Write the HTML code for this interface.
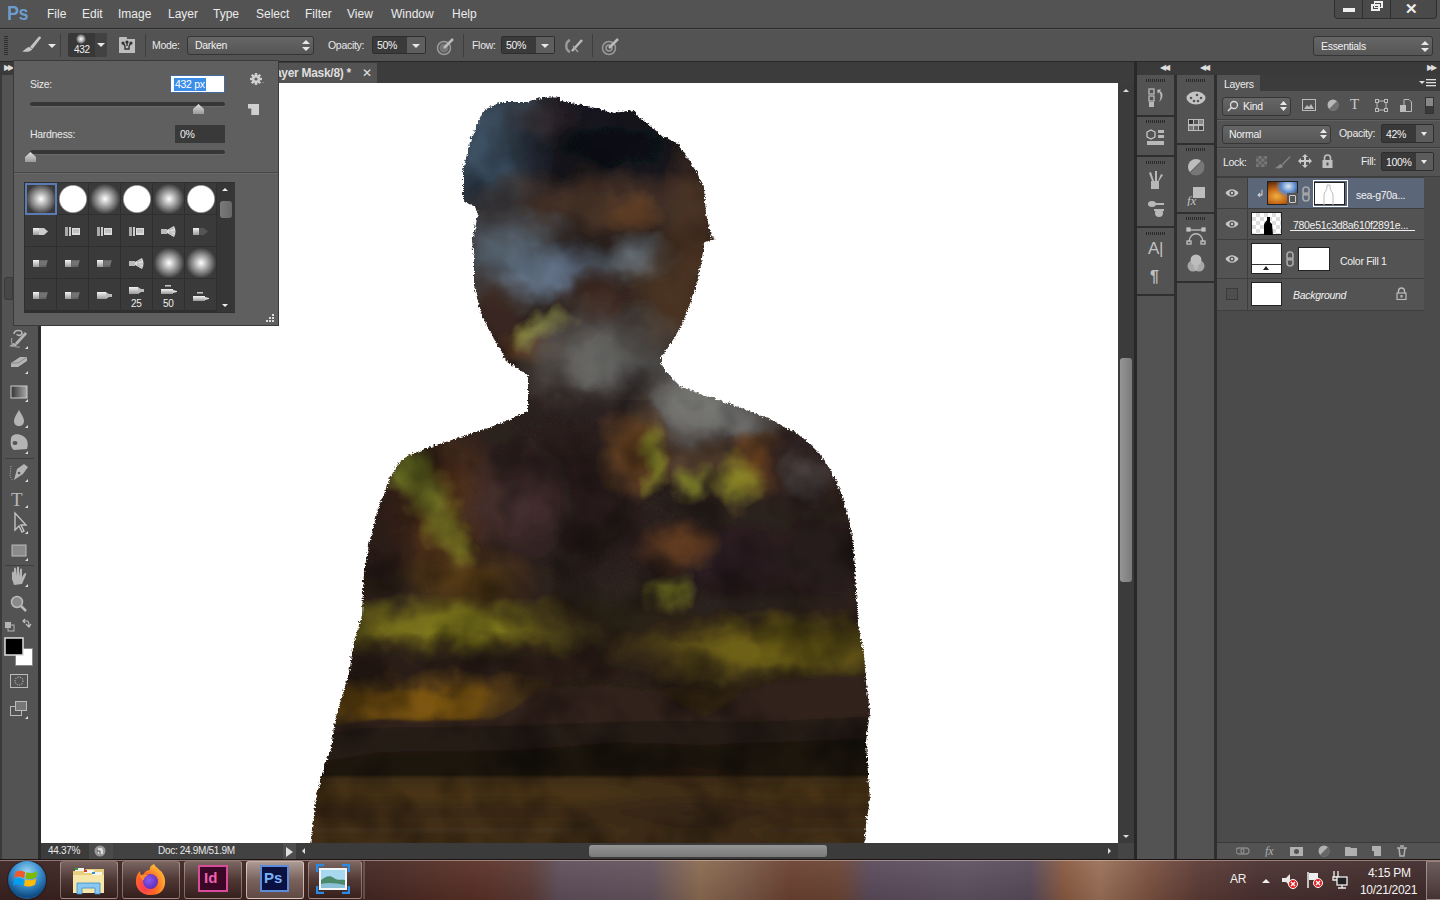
<!DOCTYPE html>
<html><head><meta charset="utf-8">
<style>
*{margin:0;padding:0;box-sizing:border-box}
html,body{width:1440px;height:900px;overflow:hidden;background:#535353;font-family:"Liberation Sans",sans-serif;color:#e6e6e6}
.a{position:absolute}
.t{position:absolute;white-space:nowrap;font-size:10.5px;line-height:12px;letter-spacing:-0.3px;color:#e8e8e8}
</style></head><body>
<!-- menu bar -->
<div class="a" style="left:0;top:0;width:1440px;height:28px;background:#535353"></div>
<div class="a" style="left:0;top:28px;width:1440px;height:1px;background:#2b2b2b"></div>
<div class="t" style="left:7px;top:2px;font-size:20px;line-height:22px;font-weight:bold;letter-spacing:-0.5px;color:#6d9dcf;transform:scaleX(0.9);transform-origin:0 0">Ps</div>
<div id="menu" class="t" style="top:7px;font-size:12px;line-height:14px;letter-spacing:0;color:#ececec">
<span class="a" style="left:47px">File</span><span class="a" style="left:82px">Edit</span><span class="a" style="left:118px">Image</span><span class="a" style="left:168px">Layer</span><span class="a" style="left:213px">Type</span><span class="a" style="left:256px">Select</span><span class="a" style="left:305px">Filter</span><span class="a" style="left:347px">View</span><span class="a" style="left:391px">Window</span><span class="a" style="left:452px">Help</span>
</div>
<!-- window controls -->
<div class="a" style="left:1334px;top:0;width:103px;height:19px;background:#4a4a4a;border:1px solid #2f2f2f;border-top:none;border-radius:0 0 4px 4px"></div>
<div class="a" style="left:1362px;top:0;width:1px;height:19px;background:#2f2f2f"></div>
<div class="a" style="left:1390px;top:0;width:1px;height:19px;background:#2f2f2f"></div>
<div class="a" style="left:1343px;top:8px;width:12px;height:4px;background:#eee"></div>
<div class="a" style="left:1371px;top:4px;width:9px;height:7px;border:2px solid #eee"></div>
<div class="a" style="left:1374px;top:1px;width:9px;height:7px;border:2px solid #eee;border-left-width:1px;border-bottom-width:1px"></div>
<div class="t" style="left:1405px;top:1px;font-size:15px;line-height:16px;font-weight:bold;color:#eee">✕</div>

<!-- options bar -->
<div class="a" style="left:0;top:29px;width:1440px;height:32px;background:#535353;border-top:1px solid #5e5e5e"></div>
<div class="a" style="left:0;top:61px;width:1440px;height:1px;background:#282828"></div>

<!-- options bar content -->
<div class="a" style="left:4px;top:36px;width:4px;height:20px;background:repeating-linear-gradient(#2e2e2e 0 1px,transparent 1px 2px)"></div>
<svg class="a" style="left:20px;top:34px" width="24" height="20" viewBox="0 0 24 20"><path d="M18.5,3 L10,13 L12.5,15 L20.5,4.5 Z" fill="#c4c4c4"/><circle cx="19.6" cy="3.8" r="1.3" fill="#c4c4c4"/><path d="M9.5,13 C6.5,13 5,16.5 2,17.3 C6,18.6 11,17.5 12.3,15.2 Z" fill="#c4c4c4"/></svg>
<div class="a" style="left:48px;top:44px;width:0;height:0;border-left:4px solid transparent;border-right:4px solid transparent;border-top:4px solid #e8e8e8"></div>
<div class="a" style="left:60px;top:34px;width:1px;height:23px;background:#3f3f3f"></div>
<div class="a" style="left:68px;top:33px;width:39px;height:24px;background:#383838;border-radius:2px"></div>
<div class="a" style="left:95px;top:33px;width:12px;height:24px;background:#424242;border-radius:0 2px 2px 0"></div>
<div class="a" style="left:76px;top:34px;width:10px;height:10px;border-radius:50%;background:radial-gradient(#fff 0,#aaa 40%,#383838 75%)"></div>
<div class="t" style="left:74px;top:44px;font-size:10px;line-height:11px;color:#f0f0f0">432</div>
<div class="a" style="left:97px;top:43px;width:0;height:0;border-left:4px solid transparent;border-right:4px solid transparent;border-top:4px solid #e8e8e8"></div>
<div class="a" style="left:119px;top:37px;width:8px;height:3px;background:#bdbdbd;border-radius:1px 1px 0 0"></div><div class="a" style="left:119px;top:39px;width:16px;height:14px;background:#bdbdbd"></div>
<svg class="a" style="left:119px;top:37px" width="16" height="16" viewBox="0 0 16 16"><circle cx="4" cy="6" r="1.6" fill="#333"/><circle cx="8" cy="5" r="1.6" fill="#333"/><circle cx="12" cy="6" r="1.6" fill="#333"/><path d="M4,6 L6,9 M12,6 L10,9 M8,5 L8,9 M6,9 L6,12 L10,12 L10,9" stroke="#333" stroke-width="1.4" fill="none"/></svg>
<div class="a" style="left:145px;top:34px;width:1px;height:23px;background:#3f3f3f"></div>
<div class="t" style="left:152px;top:39px;color:#e8e8e8">Mode:</div>
<div class="a" style="left:187px;top:36px;width:127px;height:19px;background:linear-gradient(#666,#555);border:1px solid #353535;border-radius:3px"></div>
<div class="t" style="left:195px;top:39px;color:#f0f0f0">Darken</div>
<svg class="a" style="left:302px;top:39px" width="8" height="13" viewBox="0 0 8 13"><path d="M0,5 L4,1 L8,5 Z M0,8 L4,12 L8,8 Z" fill="#e8e8e8"/></svg>
<div class="t" style="left:328px;top:39px">Opacity:</div>
<div class="a" style="left:372px;top:36px;width:54px;height:18px;background:#3a3a3a;border:1px solid #2e2e2e;border-radius:2px"></div>
<div class="a" style="left:407px;top:37px;width:18px;height:16px;background:#5e5e5e"></div>
<div class="t" style="left:377px;top:39px;color:#f4f4f4">50%</div>
<div class="a" style="left:412px;top:44px;width:0;height:0;border-left:4px solid transparent;border-right:4px solid transparent;border-top:4px solid #e8e8e8"></div>
<svg class="a" style="left:436px;top:36px" width="20" height="20" viewBox="0 0 20 20"><circle cx="8" cy="12" r="6.5" fill="none" stroke="#9a9a9a" stroke-width="1.5"/><circle cx="8" cy="12" r="4.5" fill="#777"/><path d="M8,12 L17,3" stroke="#bbb" stroke-width="2.5"/></svg>
<div class="a" style="left:463px;top:34px;width:1px;height:23px;background:#3f3f3f"></div>
<div class="t" style="left:472px;top:39px">Flow:</div>
<div class="a" style="left:501px;top:36px;width:54px;height:18px;background:#3a3a3a;border:1px solid #2e2e2e;border-radius:2px"></div>
<div class="a" style="left:536px;top:37px;width:18px;height:16px;background:#5e5e5e"></div>
<div class="t" style="left:506px;top:39px;color:#f4f4f4">50%</div>
<div class="a" style="left:541px;top:44px;width:0;height:0;border-left:4px solid transparent;border-right:4px solid transparent;border-top:4px solid #e8e8e8"></div>
<svg class="a" style="left:564px;top:36px" width="22" height="20" viewBox="0 0 22 20"><path d="M6,4 C1,6 1,14 6,16" stroke="#999" stroke-width="2.5" fill="none"/><path d="M8,15 L18,4" stroke="#bbb" stroke-width="2.5"/><path d="M9,10 L14,16" stroke="#aaa" stroke-width="1.2"/></svg>
<div class="a" style="left:592px;top:34px;width:1px;height:23px;background:#3f3f3f"></div>
<svg class="a" style="left:601px;top:36px" width="20" height="20" viewBox="0 0 20 20"><circle cx="8" cy="12" r="6.5" fill="none" stroke="#9a9a9a" stroke-width="1.5"/><circle cx="8" cy="12" r="3" fill="none" stroke="#9a9a9a" stroke-width="1.5"/><path d="M8,12 L17,3" stroke="#bbb" stroke-width="2.5"/></svg>
<!-- essentials -->
<div class="a" style="left:1313px;top:36px;width:120px;height:20px;background:linear-gradient(#666,#565656);border:1px solid #353535;border-radius:3px"></div>
<div class="t" style="left:1321px;top:40px;color:#f0f0f0">Essentials</div>
<svg class="a" style="left:1421px;top:40px" width="8" height="13" viewBox="0 0 8 13"><path d="M0,5 L4,1 L8,5 Z M0,8 L4,12 L8,8 Z" fill="#e8e8e8"/></svg>

<!-- tab bar -->
<div class="a" style="left:0;top:62px;width:1134px;height:21px;background:#3c3c3c"></div>
<div class="a" style="left:0;top:63px;width:377px;height:20px;background:#535353"></div>
<div class="t" style="left:275px;top:66px;font-size:12px;line-height:14px;font-weight:bold;color:#dedede">ayer Mask/8) *</div>
<div class="t" style="left:362px;top:66px;font-size:12px;line-height:14px;color:#e0e0e0">✕</div>

<!-- left toolbar -->
<div class="a" style="left:0;top:62px;width:38px;height:797px;background:#535353;border-left:2px solid #3a3a3a"></div>
<div class="a" style="left:38px;top:62px;width:3px;height:797px;background:#2b2b2b"></div>

<!-- canvas -->
<div class="a" style="left:41px;top:83px;width:1077px;height:760px;background:#fff;overflow:hidden" id="canvas"><svg class="a" style="left:0;top:0" width="1077" height="760" viewBox="41 83 1077 760">
<defs>
<filter id="rough" x="250" y="40" width="680" height="860" filterUnits="userSpaceOnUse"><feTurbulence type="turbulence" baseFrequency="0.25" numOctaves="2" seed="3" result="n"/><feDisplacementMap in="SourceGraphic" in2="n" scale="4" xChannelSelector="R" yChannelSelector="G"/></filter><mask id="sil" maskUnits="userSpaceOnUse" x="0" y="0" width="1440" height="900"><path d="M462,199 L462,169 L470,137 L483,109 L500,101 L526,101 L536,98 L549,95.5 L557,95.5 L560,100 L586,105 L614,112 L633,109 L635,114 L644,120 L661,135 L676,142 L695,169 L703,188 L705,212 L710,236 L714,237 L703,242 L700,265 L693,292 L683,318 L673,338 L660,355 L660,362 L665,371 L679,385 L702,394 L738,406 L773,420 L800,435 L818,452 L829,468 L838,486 L846,511 L851,535 L854,565 L855,590 L857,623 L863,653 L865,682 L869,711 L865,740 L867,773 L869,798 L865,823 L863,845 L309,845 L311,828 L315,798 L321,773 L330,748 L334,719 L340,698 L348,673 L353,640 L361,615 L362,590 L363,572 L368,543 L378,505 L389,477 L396,464 L406,455 L429,446 L460,436 L498,423 L527,410 L527,374 L507,362 L493,338 L480,312 L473,285 L473,258 L471,240 L475,223 L477,212 L474,206 Z" fill="#fff" filter="url(#rough)"/></mask>
<radialGradient id="g0"><stop offset="0" stop-color="#40566a" stop-opacity="1"/><stop offset="0.3" stop-color="#40566a" stop-opacity="0.90"/><stop offset="0.7" stop-color="#40566a" stop-opacity="0.40"/><stop offset="1" stop-color="#40566a" stop-opacity="0"/></radialGradient><radialGradient id="g1"><stop offset="0" stop-color="#3e4e5c" stop-opacity="0.85"/><stop offset="0.3" stop-color="#3e4e5c" stop-opacity="0.77"/><stop offset="0.7" stop-color="#3e4e5c" stop-opacity="0.34"/><stop offset="1" stop-color="#3e4e5c" stop-opacity="0"/></radialGradient><radialGradient id="g2"><stop offset="0" stop-color="#1a2430" stop-opacity="0.6"/><stop offset="0.3" stop-color="#1a2430" stop-opacity="0.54"/><stop offset="0.7" stop-color="#1a2430" stop-opacity="0.24"/><stop offset="1" stop-color="#1a2430" stop-opacity="0"/></radialGradient><radialGradient id="g3"><stop offset="0" stop-color="#0e1018" stop-opacity="1"/><stop offset="0.3" stop-color="#0e1018" stop-opacity="0.90"/><stop offset="0.7" stop-color="#0e1018" stop-opacity="0.40"/><stop offset="1" stop-color="#0e1018" stop-opacity="0"/></radialGradient><radialGradient id="g4"><stop offset="0" stop-color="#3a2c2e" stop-opacity="0.6"/><stop offset="0.3" stop-color="#3a2c2e" stop-opacity="0.54"/><stop offset="0.7" stop-color="#3a2c2e" stop-opacity="0.24"/><stop offset="1" stop-color="#3a2c2e" stop-opacity="0"/></radialGradient><radialGradient id="g5"><stop offset="0" stop-color="#4a3224" stop-opacity="1"/><stop offset="0.3" stop-color="#4a3224" stop-opacity="0.90"/><stop offset="0.7" stop-color="#4a3224" stop-opacity="0.40"/><stop offset="1" stop-color="#4a3224" stop-opacity="0"/></radialGradient><radialGradient id="g6"><stop offset="0" stop-color="#4a3428" stop-opacity="0.9"/><stop offset="0.3" stop-color="#4a3428" stop-opacity="0.81"/><stop offset="0.7" stop-color="#4a3428" stop-opacity="0.36"/><stop offset="1" stop-color="#4a3428" stop-opacity="0"/></radialGradient><radialGradient id="g7"><stop offset="0" stop-color="#6a4426" stop-opacity="0.8"/><stop offset="0.3" stop-color="#6a4426" stop-opacity="0.72"/><stop offset="0.7" stop-color="#6a4426" stop-opacity="0.32"/><stop offset="1" stop-color="#6a4426" stop-opacity="0"/></radialGradient><radialGradient id="g8"><stop offset="0" stop-color="#5e6e7c" stop-opacity="1"/><stop offset="0.3" stop-color="#5e6e7c" stop-opacity="0.90"/><stop offset="0.7" stop-color="#5e6e7c" stop-opacity="0.40"/><stop offset="1" stop-color="#5e6e7c" stop-opacity="0"/></radialGradient><radialGradient id="g9"><stop offset="0" stop-color="#64748a" stop-opacity="1"/><stop offset="0.3" stop-color="#64748a" stop-opacity="0.90"/><stop offset="0.7" stop-color="#64748a" stop-opacity="0.40"/><stop offset="1" stop-color="#64748a" stop-opacity="0"/></radialGradient><radialGradient id="g10"><stop offset="0" stop-color="#74808a" stop-opacity="0.9"/><stop offset="0.3" stop-color="#74808a" stop-opacity="0.81"/><stop offset="0.7" stop-color="#74808a" stop-opacity="0.36"/><stop offset="1" stop-color="#74808a" stop-opacity="0"/></radialGradient><radialGradient id="g11"><stop offset="0" stop-color="#3e2a22" stop-opacity="1"/><stop offset="0.3" stop-color="#3e2a22" stop-opacity="0.90"/><stop offset="0.7" stop-color="#3e2a22" stop-opacity="0.40"/><stop offset="1" stop-color="#3e2a22" stop-opacity="0"/></radialGradient><radialGradient id="g12"><stop offset="0" stop-color="#4a3422" stop-opacity="1"/><stop offset="0.3" stop-color="#4a3422" stop-opacity="0.90"/><stop offset="0.7" stop-color="#4a3422" stop-opacity="0.40"/><stop offset="1" stop-color="#4a3422" stop-opacity="0"/></radialGradient><radialGradient id="g13"><stop offset="0" stop-color="#3a2820" stop-opacity="1"/><stop offset="0.3" stop-color="#3a2820" stop-opacity="0.90"/><stop offset="0.7" stop-color="#3a2820" stop-opacity="0.40"/><stop offset="1" stop-color="#3a2820" stop-opacity="0"/></radialGradient><radialGradient id="g14"><stop offset="0" stop-color="#6a4020" stop-opacity="0.8"/><stop offset="0.3" stop-color="#6a4020" stop-opacity="0.72"/><stop offset="0.7" stop-color="#6a4020" stop-opacity="0.32"/><stop offset="1" stop-color="#6a4020" stop-opacity="0"/></radialGradient><radialGradient id="g15"><stop offset="0" stop-color="#8a8a40" stop-opacity="0.85"/><stop offset="0.3" stop-color="#8a8a40" stop-opacity="0.77"/><stop offset="0.7" stop-color="#8a8a40" stop-opacity="0.34"/><stop offset="1" stop-color="#8a8a40" stop-opacity="0"/></radialGradient><radialGradient id="g16"><stop offset="0" stop-color="#9a9a48" stop-opacity="0.85"/><stop offset="0.3" stop-color="#9a9a48" stop-opacity="0.77"/><stop offset="0.7" stop-color="#9a9a48" stop-opacity="0.34"/><stop offset="1" stop-color="#9a9a48" stop-opacity="0"/></radialGradient><radialGradient id="g17"><stop offset="0" stop-color="#8a8a40" stop-opacity="0.7"/><stop offset="0.3" stop-color="#8a8a40" stop-opacity="0.63"/><stop offset="0.7" stop-color="#8a8a40" stop-opacity="0.28"/><stop offset="1" stop-color="#8a8a40" stop-opacity="0"/></radialGradient><radialGradient id="g18"><stop offset="0" stop-color="#6a6a68" stop-opacity="1"/><stop offset="0.3" stop-color="#6a6a68" stop-opacity="0.90"/><stop offset="0.7" stop-color="#6a6a68" stop-opacity="0.40"/><stop offset="1" stop-color="#6a6a68" stop-opacity="0"/></radialGradient><radialGradient id="g19"><stop offset="0" stop-color="#626260" stop-opacity="0.8"/><stop offset="0.3" stop-color="#626260" stop-opacity="0.72"/><stop offset="0.7" stop-color="#626260" stop-opacity="0.32"/><stop offset="1" stop-color="#626260" stop-opacity="0"/></radialGradient><radialGradient id="g20"><stop offset="0" stop-color="#2a2020" stop-opacity="0.9"/><stop offset="0.3" stop-color="#2a2020" stop-opacity="0.81"/><stop offset="0.7" stop-color="#2a2020" stop-opacity="0.36"/><stop offset="1" stop-color="#2a2020" stop-opacity="0"/></radialGradient><radialGradient id="g21"><stop offset="0" stop-color="#2a1e1e" stop-opacity="1"/><stop offset="0.3" stop-color="#2a1e1e" stop-opacity="0.90"/><stop offset="0.7" stop-color="#2a1e1e" stop-opacity="0.40"/><stop offset="1" stop-color="#2a1e1e" stop-opacity="0"/></radialGradient><radialGradient id="g22"><stop offset="0" stop-color="#2a1e20" stop-opacity="1"/><stop offset="0.3" stop-color="#2a1e20" stop-opacity="0.90"/><stop offset="0.7" stop-color="#2a1e20" stop-opacity="0.40"/><stop offset="1" stop-color="#2a1e20" stop-opacity="0"/></radialGradient><radialGradient id="g23"><stop offset="0" stop-color="#2a2020" stop-opacity="0.9"/><stop offset="0.3" stop-color="#2a2020" stop-opacity="0.81"/><stop offset="0.7" stop-color="#2a2020" stop-opacity="0.36"/><stop offset="1" stop-color="#2a2020" stop-opacity="0"/></radialGradient><radialGradient id="g24"><stop offset="0" stop-color="#727270" stop-opacity="1"/><stop offset="0.3" stop-color="#727270" stop-opacity="0.90"/><stop offset="0.7" stop-color="#727270" stop-opacity="0.40"/><stop offset="1" stop-color="#727270" stop-opacity="0"/></radialGradient><radialGradient id="g25"><stop offset="0" stop-color="#787874" stop-opacity="0.9"/><stop offset="0.3" stop-color="#787874" stop-opacity="0.81"/><stop offset="0.7" stop-color="#787874" stop-opacity="0.36"/><stop offset="1" stop-color="#787874" stop-opacity="0"/></radialGradient><radialGradient id="g26"><stop offset="0" stop-color="#747472" stop-opacity="0.7"/><stop offset="0.3" stop-color="#747472" stop-opacity="0.63"/><stop offset="0.7" stop-color="#747472" stop-opacity="0.28"/><stop offset="1" stop-color="#747472" stop-opacity="0"/></radialGradient><radialGradient id="g27"><stop offset="0" stop-color="#5a4432" stop-opacity="0.9"/><stop offset="0.3" stop-color="#5a4432" stop-opacity="0.81"/><stop offset="0.7" stop-color="#5a4432" stop-opacity="0.36"/><stop offset="1" stop-color="#5a4432" stop-opacity="0"/></radialGradient><radialGradient id="g28"><stop offset="0" stop-color="#6a4422" stop-opacity="1"/><stop offset="0.3" stop-color="#6a4422" stop-opacity="0.90"/><stop offset="0.7" stop-color="#6a4422" stop-opacity="0.40"/><stop offset="1" stop-color="#6a4422" stop-opacity="0"/></radialGradient><radialGradient id="g29"><stop offset="0" stop-color="#9aa030" stop-opacity="0.8"/><stop offset="0.3" stop-color="#9aa030" stop-opacity="0.72"/><stop offset="0.7" stop-color="#9aa030" stop-opacity="0.32"/><stop offset="1" stop-color="#9aa030" stop-opacity="0"/></radialGradient><radialGradient id="g30"><stop offset="0" stop-color="#9aa030" stop-opacity="0.8"/><stop offset="0.3" stop-color="#9aa030" stop-opacity="0.72"/><stop offset="0.7" stop-color="#9aa030" stop-opacity="0.32"/><stop offset="1" stop-color="#9aa030" stop-opacity="0"/></radialGradient><radialGradient id="g31"><stop offset="0" stop-color="#7a4a20" stop-opacity="0.9"/><stop offset="0.3" stop-color="#7a4a20" stop-opacity="0.81"/><stop offset="0.7" stop-color="#7a4a20" stop-opacity="0.36"/><stop offset="1" stop-color="#7a4a20" stop-opacity="0"/></radialGradient><radialGradient id="g32"><stop offset="0" stop-color="#9a9a2a" stop-opacity="0.8"/><stop offset="0.3" stop-color="#9a9a2a" stop-opacity="0.72"/><stop offset="0.7" stop-color="#9a9a2a" stop-opacity="0.32"/><stop offset="1" stop-color="#9a9a2a" stop-opacity="0"/></radialGradient><radialGradient id="g33"><stop offset="0" stop-color="#2e2222" stop-opacity="0.9"/><stop offset="0.3" stop-color="#2e2222" stop-opacity="0.81"/><stop offset="0.7" stop-color="#2e2222" stop-opacity="0.36"/><stop offset="1" stop-color="#2e2222" stop-opacity="0"/></radialGradient><radialGradient id="g34"><stop offset="0" stop-color="#6a6060" stop-opacity="0.6"/><stop offset="0.3" stop-color="#6a6060" stop-opacity="0.54"/><stop offset="0.7" stop-color="#6a6060" stop-opacity="0.24"/><stop offset="1" stop-color="#6a6060" stop-opacity="0"/></radialGradient><radialGradient id="g35"><stop offset="0" stop-color="#6a4020" stop-opacity="0.9"/><stop offset="0.3" stop-color="#6a4020" stop-opacity="0.81"/><stop offset="0.7" stop-color="#6a4020" stop-opacity="0.36"/><stop offset="1" stop-color="#6a4020" stop-opacity="0"/></radialGradient><radialGradient id="g36"><stop offset="0" stop-color="#8a8a28" stop-opacity="0.9"/><stop offset="0.3" stop-color="#8a8a28" stop-opacity="0.81"/><stop offset="0.7" stop-color="#8a8a28" stop-opacity="0.36"/><stop offset="1" stop-color="#8a8a28" stop-opacity="0"/></radialGradient><radialGradient id="g37"><stop offset="0" stop-color="#241a1e" stop-opacity="0.9"/><stop offset="0.3" stop-color="#241a1e" stop-opacity="0.81"/><stop offset="0.7" stop-color="#241a1e" stop-opacity="0.36"/><stop offset="1" stop-color="#241a1e" stop-opacity="0"/></radialGradient><radialGradient id="g38"><stop offset="0" stop-color="#5a3418" stop-opacity="0.9"/><stop offset="0.3" stop-color="#5a3418" stop-opacity="0.81"/><stop offset="0.7" stop-color="#5a3418" stop-opacity="0.36"/><stop offset="1" stop-color="#5a3418" stop-opacity="0"/></radialGradient><radialGradient id="g39"><stop offset="0" stop-color="#2a1a18" stop-opacity="0.9"/><stop offset="0.3" stop-color="#2a1a18" stop-opacity="0.81"/><stop offset="0.7" stop-color="#2a1a18" stop-opacity="0.36"/><stop offset="1" stop-color="#2a1a18" stop-opacity="0"/></radialGradient><radialGradient id="g40"><stop offset="0" stop-color="#4a3232" stop-opacity="0.8"/><stop offset="0.3" stop-color="#4a3232" stop-opacity="0.72"/><stop offset="0.7" stop-color="#4a3232" stop-opacity="0.32"/><stop offset="1" stop-color="#4a3232" stop-opacity="0"/></radialGradient><radialGradient id="g41"><stop offset="0" stop-color="#7e8a2a" stop-opacity="0.9"/><stop offset="0.3" stop-color="#7e8a2a" stop-opacity="0.81"/><stop offset="0.7" stop-color="#7e8a2a" stop-opacity="0.36"/><stop offset="1" stop-color="#7e8a2a" stop-opacity="0"/></radialGradient><radialGradient id="g42"><stop offset="0" stop-color="#7a8228" stop-opacity="0.9"/><stop offset="0.3" stop-color="#7a8228" stop-opacity="0.81"/><stop offset="0.7" stop-color="#7a8228" stop-opacity="0.36"/><stop offset="1" stop-color="#7a8228" stop-opacity="0"/></radialGradient><radialGradient id="g43"><stop offset="0" stop-color="#7a7a24" stop-opacity="0.9"/><stop offset="0.3" stop-color="#7a7a24" stop-opacity="0.81"/><stop offset="0.7" stop-color="#7a7a24" stop-opacity="0.36"/><stop offset="1" stop-color="#7a7a24" stop-opacity="0"/></radialGradient><radialGradient id="g44"><stop offset="0" stop-color="#8a8a28" stop-opacity="0.9"/><stop offset="0.3" stop-color="#8a8a28" stop-opacity="0.81"/><stop offset="0.7" stop-color="#8a8a28" stop-opacity="0.36"/><stop offset="1" stop-color="#8a8a28" stop-opacity="0"/></radialGradient><radialGradient id="g45"><stop offset="0" stop-color="#5e4018" stop-opacity="0.8"/><stop offset="0.3" stop-color="#5e4018" stop-opacity="0.72"/><stop offset="0.7" stop-color="#5e4018" stop-opacity="0.32"/><stop offset="1" stop-color="#5e4018" stop-opacity="0"/></radialGradient><radialGradient id="g46"><stop offset="0" stop-color="#807a1a" stop-opacity="1"/><stop offset="0.3" stop-color="#807a1a" stop-opacity="0.90"/><stop offset="0.7" stop-color="#807a1a" stop-opacity="0.40"/><stop offset="1" stop-color="#807a1a" stop-opacity="0"/></radialGradient><radialGradient id="g47"><stop offset="0" stop-color="#726416" stop-opacity="1"/><stop offset="0.3" stop-color="#726416" stop-opacity="0.90"/><stop offset="0.7" stop-color="#726416" stop-opacity="0.40"/><stop offset="1" stop-color="#726416" stop-opacity="0"/></radialGradient><radialGradient id="g48"><stop offset="0" stop-color="#2a2016" stop-opacity="0.9"/><stop offset="0.3" stop-color="#2a2016" stop-opacity="0.81"/><stop offset="0.7" stop-color="#2a2016" stop-opacity="0.36"/><stop offset="1" stop-color="#2a2016" stop-opacity="0"/></radialGradient><radialGradient id="g49"><stop offset="0" stop-color="#2a1e16" stop-opacity="1"/><stop offset="0.3" stop-color="#2a1e16" stop-opacity="0.90"/><stop offset="0.7" stop-color="#2a1e16" stop-opacity="0.40"/><stop offset="1" stop-color="#2a1e16" stop-opacity="0"/></radialGradient><radialGradient id="g50"><stop offset="0" stop-color="#7a5410" stop-opacity="1"/><stop offset="0.3" stop-color="#7a5410" stop-opacity="0.90"/><stop offset="0.7" stop-color="#7a5410" stop-opacity="0.40"/><stop offset="1" stop-color="#7a5410" stop-opacity="0"/></radialGradient><radialGradient id="g51"><stop offset="0" stop-color="#7e5812" stop-opacity="0.8"/><stop offset="0.3" stop-color="#7e5812" stop-opacity="0.72"/><stop offset="0.7" stop-color="#7e5812" stop-opacity="0.32"/><stop offset="1" stop-color="#7e5812" stop-opacity="0"/></radialGradient><radialGradient id="g52"><stop offset="0" stop-color="#6a4c12" stop-opacity="0.9"/><stop offset="0.3" stop-color="#6a4c12" stop-opacity="0.81"/><stop offset="0.7" stop-color="#6a4c12" stop-opacity="0.36"/><stop offset="1" stop-color="#6a4c12" stop-opacity="0"/></radialGradient><radialGradient id="g53"><stop offset="0" stop-color="#2e2218" stop-opacity="0.9"/><stop offset="0.3" stop-color="#2e2218" stop-opacity="0.81"/><stop offset="0.7" stop-color="#2e2218" stop-opacity="0.36"/><stop offset="1" stop-color="#2e2218" stop-opacity="0"/></radialGradient><radialGradient id="g54"><stop offset="0" stop-color="#2a2018" stop-opacity="0.9"/><stop offset="0.3" stop-color="#2a2018" stop-opacity="0.81"/><stop offset="0.7" stop-color="#2a2018" stop-opacity="0.36"/><stop offset="1" stop-color="#2a2018" stop-opacity="0"/></radialGradient>
<filter id="tex" x="0" y="0" width="100%" height="100%" color-interpolation-filters="sRGB"><feTurbulence type="fractalNoise" baseFrequency="0.018" numOctaves="3" seed="23"/><feColorMatrix type="matrix" values="0 0 0 0 0  0 0 0 0 0  0 0 0 0 0  2.4 0 0 0 -1.0"/></filter>
<filter id="soft" x="-5%" y="-5%" width="110%" height="110%"><feGaussianBlur stdDeviation="1.5"/></filter><radialGradient id="wdark"><stop offset="0" stop-color="#2a1e14" stop-opacity="0.55"/><stop offset="1" stop-color="#2a1e14" stop-opacity="0"/></radialGradient><linearGradient id="water" x1="0" y1="0" x2="0" y2="1"><stop offset="0" stop-color="#3e2c16"/><stop offset="0.25" stop-color="#4a3418"/><stop offset="0.5" stop-color="#3c2a15"/><stop offset="0.75" stop-color="#44301a"/><stop offset="1" stop-color="#3e2c16"/></linearGradient>
<filter id="disp" x="300" y="90" width="580" height="760" filterUnits="userSpaceOnUse"><feTurbulence type="fractalNoise" baseFrequency="0.03" numOctaves="3" seed="5" result="n"/><feDisplacementMap in="SourceGraphic" in2="n" scale="28" xChannelSelector="R" yChannelSelector="G"/></filter>
<linearGradient id="base" x1="0" y1="83" x2="0" y2="843" gradientUnits="userSpaceOnUse">
<stop offset="0" stop-color="#1a1a24"/>
<stop offset="0.2" stop-color="#2e2420"/>
<stop offset="0.45" stop-color="#2e221e"/>
<stop offset="0.68" stop-color="#30241a"/>
<stop offset="0.82" stop-color="#241a14"/>
<stop offset="0.92" stop-color="#3a2814"/>
<stop offset="1" stop-color="#3a2a16"/>
</linearGradient>
</defs>
<g mask="url(#sil)">
<g filter="url(#disp)"><rect x="250" y="40" width="680" height="860" fill="url(#base)"/>
<ellipse cx="492" cy="150" rx="67" ry="91" fill="url(#g0)"/><ellipse cx="522" cy="125" rx="46" ry="38" fill="url(#g1)"/><ellipse cx="478" cy="192" rx="26" ry="29" fill="url(#g2)"/><ellipse cx="612" cy="148" rx="137" ry="57" fill="url(#g3)"/><ellipse cx="545" cy="118" rx="43" ry="24" fill="url(#g4)"/><ellipse cx="692" cy="228" rx="40" ry="99" fill="url(#g5)"/><ellipse cx="600" cy="205" rx="144" ry="40" fill="url(#g6)"/><ellipse cx="630" cy="212" rx="32" ry="24" fill="url(#g7)"/><ellipse cx="512" cy="262" rx="77" ry="57" fill="url(#g8)"/><ellipse cx="560" cy="272" rx="74" ry="35" fill="url(#g9)"/><ellipse cx="640" cy="258" rx="46" ry="29" fill="url(#g10)"/><ellipse cx="595" cy="294" rx="46" ry="29" fill="url(#g11)"/><ellipse cx="672" cy="298" rx="49" ry="71" fill="url(#g12)"/><ellipse cx="495" cy="318" rx="40" ry="60" fill="url(#g13)"/><ellipse cx="530" cy="345" rx="35" ry="24" fill="url(#g14)"/><ellipse cx="528" cy="335" rx="19" ry="17" fill="url(#g15)"/><ellipse cx="545" cy="327" rx="22" ry="17" fill="url(#g16)"/><ellipse cx="561" cy="318" rx="17" ry="14" fill="url(#g17)"/><ellipse cx="605" cy="362" rx="95" ry="67" fill="url(#g18)"/><ellipse cx="640" cy="387" rx="60" ry="38" fill="url(#g19)"/><ellipse cx="575" cy="418" rx="81" ry="32" fill="url(#g20)"/><ellipse cx="560" cy="500" rx="144" ry="130" fill="url(#g21)"/><ellipse cx="725" cy="560" rx="186" ry="88" fill="url(#g22)"/><ellipse cx="634" cy="405" rx="53" ry="43" fill="url(#g23)"/><ellipse cx="712" cy="410" rx="91" ry="49" fill="url(#g24)"/><ellipse cx="688" cy="396" rx="43" ry="35" fill="url(#g25)"/><ellipse cx="735" cy="420" rx="46" ry="24" fill="url(#g26)"/><ellipse cx="693" cy="466" rx="57" ry="29" fill="url(#g27)"/><ellipse cx="636" cy="452" rx="43" ry="53" fill="url(#g28)"/><ellipse cx="654" cy="460" rx="18" ry="39" fill="url(#g29)"/><ellipse cx="693" cy="484" rx="26" ry="21" fill="url(#g30)"/><ellipse cx="760" cy="462" rx="35" ry="40" fill="url(#g31)"/><ellipse cx="740" cy="482" rx="26" ry="32" fill="url(#g32)"/><ellipse cx="804" cy="468" rx="53" ry="53" fill="url(#g33)"/><ellipse cx="807" cy="478" rx="32" ry="26" fill="url(#g34)"/><ellipse cx="680" cy="547" rx="43" ry="32" fill="url(#g35)"/><ellipse cx="669" cy="593" rx="29" ry="24" fill="url(#g36)"/><ellipse cx="822" cy="555" rx="53" ry="49" fill="url(#g37)"/><ellipse cx="440" cy="510" rx="67" ry="91" fill="url(#g38)"/><ellipse cx="385" cy="540" rx="35" ry="67" fill="url(#g39)"/><ellipse cx="515" cy="500" rx="60" ry="60" fill="url(#g40)"/><ellipse cx="410" cy="470" rx="29" ry="26" fill="url(#g41)"/><ellipse cx="428" cy="495" rx="29" ry="32" fill="url(#g42)"/><ellipse cx="445" cy="525" rx="29" ry="32" fill="url(#g43)"/><ellipse cx="458" cy="553" rx="26" ry="24" fill="url(#g44)"/><ellipse cx="470" cy="580" rx="74" ry="38" fill="url(#g45)"/><ellipse cx="455" cy="628" rx="165" ry="35" fill="url(#g46)"/><ellipse cx="770" cy="650" rx="172" ry="40" fill="url(#g47)"/><ellipse cx="620" cy="618" rx="130" ry="29" fill="url(#g48)"/><ellipse cx="495" cy="668" rx="256" ry="38" fill="url(#g49)"/><ellipse cx="425" cy="704" rx="165" ry="35" fill="url(#g50)"/><ellipse cx="400" cy="706" rx="88" ry="24" fill="url(#g51)"/><ellipse cx="705" cy="704" rx="68" ry="24" fill="url(#g52)"/><ellipse cx="612" cy="708" rx="151" ry="40" fill="url(#g53)"/><ellipse cx="795" cy="708" rx="130" ry="43" fill="url(#g54)"/></g>
<g filter="url(#soft)">
<path d="M300,727 L336,725 L380,719 L421,721 L493,719 L513,709 L542,689 L602,685 L662,693 L703,717 L719,709 L743,693 L783,679 L880,676 L880,780 L300,780 Z" fill="#30241a"/>
<path d="M300,738 L360,728 L500,726 L640,721 L760,722 L880,716 L880,778 L300,778 Z" fill="#271c15"/><path d="M300,765 L380,752 L520,750 L620,742 L700,745 L880,738 L880,778 L300,778 Z" fill="#1f1610"/>
<rect x="300" y="777" width="580" height="70" fill="url(#water)"/><ellipse cx="690" cy="815" rx="110" ry="50" fill="url(#wdark)"/>
</g>

<rect x="300" y="90" width="580" height="310" filter="url(#tex)" opacity="0.22"/><rect x="300" y="400" width="580" height="450" filter="url(#tex)" opacity="0.4"/>
</g>
</svg>
</div>

<!-- vertical scrollbar -->
<div class="a" style="left:1118px;top:83px;width:16px;height:760px;background:#3b3b3b"></div>
<div class="a" style="left:1120px;top:358px;width:12px;height:224px;background:linear-gradient(90deg,#969696,#7a7a7a);border-radius:3px"></div>
<div class="a" style="left:1134px;top:62px;width:3px;height:797px;background:#282828"></div>

<!-- status bar -->
<div class="a" style="left:41px;top:843px;width:1093px;height:16px;background:#3b3b3b"></div>

<!-- left toolbar details -->
<div class="a" style="left:0;top:62px;width:38px;height:13px;background:#3a3a3a"></div>
<div class="t" style="left:4px;top:63px;font-size:8px;line-height:10px;color:#ddd;letter-spacing:-2px">▶▶</div>
<div class="a" style="left:4px;top:277px;width:9px;height:23px;background:#474747;border:1px solid #3a3a3a;border-radius:3px 0 0 3px"></div>
<svg class="a" style="left:0;top:326px" width="38" height="400" viewBox="0 0 38 400" fill="#b4b4b4">
<!-- history brush -->
<path d="M14,8 C14,4 22,3 22,7 C22,10 17,10 17,8" fill="none" stroke="#b4b4b4" stroke-width="1.6"/>
<path d="M25,6 L15,17 L17,19 L27,8Z"/><path d="M14,17 C12,17 11,20 9,20 C12,21 16,21 17,19Z"/>
<path d="M12,12 C10,18 14,22 20,21" fill="none" stroke="#999" stroke-width="1.2"/>
<path d="M28,20 L28,23 L25,23Z" fill="#ddd"/>
<!-- eraser -->
<path d="M11,37 L20,31 L27,31 L27,35 L18,41 L11,41Z"/><path d="M11,37 L18,37 L27,31" fill="none" stroke="#888" stroke-width="1"/>
<path d="M28,45 L28,48 L25,48Z" fill="#ddd"/>
<!-- gradient -->
<rect x="11" y="60" width="16" height="12" fill="url(#tg)" stroke="#ccc" stroke-width="1"/>
<path d="M28,73 L28,76 L25,76Z" fill="#ddd"/>
<!-- drop -->
<path d="M19,84 C16,89 14,92 14,95 C14,98 16,100 19,100 C22,100 24,98 24,95 C24,92 22,89 19,84Z"/>
<path d="M28,99 L28,102 L25,102Z" fill="#ddd"/>
<!-- dodge -->
<path d="M11,113 C11,108 18,107 23,110 C27,112 29,117 27,123 L14,124 C11,122 10,118 11,113Z"/><ellipse cx="15" cy="117" rx="2.5" ry="2" fill="#555"/>
<path d="M28,125 L28,128 L25,128Z" fill="#ddd"/>
<rect x="5" y="132" width="29" height="1" fill="#3e3e3e"/>
<!-- pen -->
<path d="M14,154 L17,143 L24,138 L28,141 L23,148Z"/><circle cx="19" cy="147" r="1.3" fill="#555"/>
<path d="M11,140 L10,150 L13,155" fill="none" stroke="#aaa" stroke-width="1" stroke-dasharray="1 1.3"/>
<path d="M28,153 L28,156 L25,156Z" fill="#ddd"/>
<!-- T -->
<text x="11" y="180" font-family="Liberation Serif" font-size="19" fill="#b8b8b8">T</text>
<path d="M28,179 L28,182 L25,182Z" fill="#ddd"/>
<!-- arrow -->
<path d="M15,187 L15,204 L19,200 L22,206 L24,205 L21,199 L26,199Z" fill="none" stroke="#c0c0c0" stroke-width="1.4"/>
<path d="M28,205 L28,208 L25,208Z" fill="#ddd"/>
<!-- rect -->
<rect x="12" y="219" width="14" height="11" fill="#8a8a8a" stroke="#bbb" stroke-width="1"/>
<path d="M28,232 L28,235 L25,235Z" fill="#ddd"/>
<rect x="5" y="239" width="29" height="1" fill="#3e3e3e"/>
<!-- hand -->
<path d="M12,253 L12,247 C12,245 14,245 14,247 L14,251 L14,243 C14,241 16,241 16,243 L16,250 L17,242 C17,240 19,240 19,242 L19,250 L20,244 C20,242 22,242 22,244 L22,251 L24,248 C25,246 27,247 26,249 L22,258 L14,259Z"/>
<path d="M28,258 L28,261 L25,261Z" fill="#ddd"/>
<!-- zoom -->
<circle cx="17" cy="276" r="5.5" fill="#8a8a8a" stroke="#bbb" stroke-width="1.5"/><path d="M21,280 L26,285" stroke="#bbb" stroke-width="2.5"/>
<!-- mini swatches -->
<rect x="5" y="296" width="6" height="6" fill="#b4b4b4"/><rect x="8" y="299" width="6" height="6" fill="none" stroke="#b4b4b4" stroke-width="1"/>
<path d="M23,295 L27,295 C29,295 29,297 29,300 M26,298 L29,301 L31,298 M25,293 L23,295 L25,297" fill="none" stroke="#c0c0c0" stroke-width="1.2"/>
<!-- colors -->
<rect x="15.5" y="322.5" width="17" height="17" fill="#fff" stroke="#888" stroke-width="1"/>
<rect x="5" y="312" width="18" height="17" fill="#000" stroke="#ddd" stroke-width="1.5"/>
<!-- quick mask -->
<rect x="10.5" y="348.5" width="17" height="13" fill="none" stroke="#bbb" stroke-width="1"/><circle cx="19" cy="355" r="4" fill="none" stroke="#ccc" stroke-dasharray="1.2 1.2"/>
<!-- screen mode -->
<rect x="10.5" y="380.5" width="11" height="9" fill="none" stroke="#bbb"/><rect x="15.5" y="375.5" width="11" height="9" fill="#777" stroke="#bbb"/>
<path d="M28,390 L28,393 L25,393Z" fill="#ddd"/>
<defs><linearGradient id="tg" x1="0" x2="1"><stop offset="0" stop-color="#333"/><stop offset="1" stop-color="#aaa"/></linearGradient></defs>
</svg>
<!-- status bar -->
<div class="a" style="left:41px;top:843px;width:48px;height:16px;background:#3c3c3c"></div>
<div class="t" style="left:48px;top:845px;font-size:10px;color:#e8e8e8">44.37%</div>
<div class="a" style="left:89px;top:843px;width:24px;height:16px;background:#4a4a4a"></div>
<svg class="a" style="left:94px;top:845px" width="12" height="12" viewBox="0 0 12 12"><circle cx="6" cy="6" r="5.5" fill="#999"/><path d="M4,3 L8,3 L9,5 L9,9 L4,9Z" fill="#ddd"/><path d="M3,6 L6,6 L6,9" fill="none" stroke="#555"/></svg>
<div class="a" style="left:113px;top:843px;width:170px;height:16px;background:#424242"></div>
<div class="t" style="left:158px;top:845px;font-size:10px;color:#e8e8e8">Doc: 24.9M/51.9M</div>
<div class="a" style="left:283px;top:843px;width:13px;height:16px;background:#4e4e4e"></div>
<div class="a" style="left:286px;top:847px;width:0;height:0;border-top:5px solid transparent;border-bottom:5px solid transparent;border-left:7px solid #e0e0e0"></div>
<div class="a" style="left:296px;top:843px;width:822px;height:16px;background:#3b3b3b"></div>
<div class="a" style="left:302px;top:848px;width:0;height:0;border-top:3px solid transparent;border-bottom:3px solid transparent;border-right:3px solid #ddd"></div>
<div class="a" style="left:1108px;top:848px;width:0;height:0;border-top:3px solid transparent;border-bottom:3px solid transparent;border-left:3px solid #ddd"></div>
<div class="a" style="left:589px;top:845px;width:238px;height:12px;background:linear-gradient(#949494,#7a7a7a);border-radius:3px"></div>
<div class="a" style="left:1118px;top:843px;width:16px;height:16px;background:#454545"></div>
<div class="a" style="left:1123px;top:89px;width:0;height:0;border-left:3px solid transparent;border-right:3px solid transparent;border-bottom:3px solid #ddd"></div>
<div class="a" style="left:1123px;top:835px;width:0;height:0;border-left:3px solid transparent;border-right:3px solid transparent;border-top:3px solid #ddd"></div>

<!-- panels -->
<div class="a" style="left:1137px;top:62px;width:303px;height:13px;background:#3a3a3a"></div>
<div class="a" style="left:1137px;top:75px;width:37px;height:784px;background:#535353"></div>
<div class="a" style="left:1174px;top:75px;width:3px;height:784px;background:#2f2f2f"></div>
<div class="a" style="left:1177px;top:75px;width:37px;height:784px;background:#535353"></div>
<div class="a" style="left:1214px;top:75px;width:3px;height:784px;background:#2f2f2f"></div>
<div class="a" style="left:1217px;top:75px;width:223px;height:784px;background:#535353"></div>

<!-- collapse arrows -->
<div class="t" style="left:1160px;top:63px;font-size:8px;line-height:10px;color:#ddd;letter-spacing:-2px">◀◀</div>
<div class="t" style="left:1200px;top:63px;font-size:8px;line-height:10px;color:#ddd;letter-spacing:-2px">◀◀</div>
<div class="t" style="left:1427px;top:63px;font-size:8px;line-height:10px;color:#ddd;letter-spacing:-2px">▶▶</div>
<!-- column 1 groups -->
<div class="a" style="left:1137px;top:115px;width:37px;height:2px;background:#2f2f2f"></div>
<div class="a" style="left:1137px;top:155px;width:37px;height:2px;background:#2f2f2f"></div>
<div class="a" style="left:1137px;top:226px;width:37px;height:2px;background:#2f2f2f"></div>
<div class="a" style="left:1137px;top:294px;width:37px;height:2px;background:#2f2f2f"></div>
<div class="a" style="left:1177px;top:143px;width:37px;height:2px;background:#2f2f2f"></div>
<div class="a" style="left:1177px;top:212px;width:37px;height:2px;background:#2f2f2f"></div>
<div class="a" style="left:1177px;top:281px;width:37px;height:2px;background:#2f2f2f"></div>
<div class="a" style="left:1146px;top:79px;width:19px;height:3px;background:repeating-linear-gradient(90deg,#2a2a2a 0 1px,transparent 1px 2px)"></div>
<div class="a" style="left:1146px;top:120px;width:19px;height:3px;background:repeating-linear-gradient(90deg,#2a2a2a 0 1px,transparent 1px 2px)"></div>
<div class="a" style="left:1146px;top:161px;width:19px;height:3px;background:repeating-linear-gradient(90deg,#2a2a2a 0 1px,transparent 1px 2px)"></div>
<div class="a" style="left:1146px;top:232px;width:19px;height:3px;background:repeating-linear-gradient(90deg,#2a2a2a 0 1px,transparent 1px 2px)"></div>
<div class="a" style="left:1186px;top:79px;width:19px;height:3px;background:repeating-linear-gradient(90deg,#2a2a2a 0 1px,transparent 1px 2px)"></div>
<div class="a" style="left:1186px;top:148px;width:19px;height:3px;background:repeating-linear-gradient(90deg,#2a2a2a 0 1px,transparent 1px 2px)"></div>
<div class="a" style="left:1186px;top:217px;width:19px;height:3px;background:repeating-linear-gradient(90deg,#2a2a2a 0 1px,transparent 1px 2px)"></div>
<!-- col1 icons -->
<svg class="a" style="left:1147px;top:88px" width="20" height="20" viewBox="0 0 20 20" fill="#b8b8b8"><rect x="2" y="1" width="5" height="5" fill="none" stroke="#b8b8b8" stroke-width="1.3"/><rect x="2" y="8" width="5" height="5" fill="none" stroke="#b8b8b8" stroke-width="1.3"/><rect x="2" y="14" width="5" height="5"/><path d="M10,2 L14,1 L13,3 C17,5 16,11 12,14 C14,10 14,6 12,4 L11,6Z"/></svg>
<svg class="a" style="left:1146px;top:128px" width="20" height="20" viewBox="0 0 20 20" fill="#b8b8b8"><path d="M5,2 L9,4 L9,9 L5,11 L1,9 L1,4Z" fill="none" stroke="#ccc" stroke-width="1.2"/><rect x="12" y="2" width="6" height="3"/><rect x="12" y="7" width="6" height="3"/><rect x="1" y="13" width="17" height="4"/></svg>
<svg class="a" style="left:1146px;top:170px" width="20" height="20" viewBox="0 0 20 20" fill="#b8b8b8"><rect x="5" y="11" width="8" height="8"/><path d="M6,11 L3,3 L5,2 L8,11 M9,11 L9,1 L11,1 L11,11 M12,11 L15,4 L17,5 L13,11"/></svg>
<svg class="a" style="left:1146px;top:199px" width="20" height="20" viewBox="0 0 20 20" fill="#b8b8b8"><rect x="2" y="4" width="16" height="2"/><rect x="8" y="10" width="10" height="2"/><ellipse cx="6" cy="5" rx="4" ry="3"/><ellipse cx="13" cy="14" rx="4" ry="4"/></svg>
<div class="t" style="left:1148px;top:240px;font-size:17px;line-height:18px;color:#c0c0c0">A|</div>
<div class="t" style="left:1150px;top:268px;font-size:16px;line-height:18px;font-weight:bold;color:#c0c0c0">¶</div>
<!-- col2 icons -->
<svg class="a" style="left:1186px;top:90px" width="20" height="16" viewBox="0 0 20 16"><ellipse cx="10" cy="8" rx="9.5" ry="6.5" fill="#c4c4c4"/><circle cx="5" cy="8" r="1.3" fill="#555"/><circle cx="8" cy="11" r="1.3" fill="#555"/><circle cx="12" cy="11" r="1.3" fill="#555"/><circle cx="15" cy="8" r="1.3" fill="#555"/><circle cx="11" cy="5" r="1.3" fill="#555"/></svg>
<svg class="a" style="left:1188px;top:119px" width="16" height="12" viewBox="0 0 16 12"><rect x="0" y="0" width="16" height="12" fill="#bbb"/><rect x="1" y="1" width="4" height="4" fill="#333"/><rect x="6" y="1" width="4" height="4" fill="#555"/><rect x="11" y="1" width="4" height="4" fill="#888"/><rect x="1" y="7" width="4" height="4" fill="#777"/><rect x="6" y="7" width="4" height="4" fill="#666"/><rect x="11" y="7" width="4" height="4" fill="#444"/></svg>
<svg class="a" style="left:1187px;top:158px" width="18" height="18" viewBox="0 0 18 18"><circle cx="9" cy="9" r="8" fill="#bdbdbd"/><path d="M3,15 L15,3" stroke="#555" stroke-width="1.5"/><path d="M15,3 A8,8 0 0,1 3,15Z" fill="#777"/></svg>
<svg class="a" style="left:1187px;top:186px" width="20" height="20" viewBox="0 0 20 20"><rect x="6" y="1" width="12" height="11" fill="#bdbdbd"/><text x="0" y="19" font-family="Liberation Serif" font-style="italic" font-size="13" fill="#c0c0c0">fx</text></svg>
<svg class="a" style="left:1186px;top:227px" width="20" height="18" viewBox="0 0 20 18" fill="none" stroke="#c0c0c0" stroke-width="1.3"><path d="M3,15 C4,4 16,4 17,15"/><rect x="1" y="14" width="4" height="3"/><rect x="15" y="14" width="4" height="3"/><path d="M2,3 L18,3"/><rect x="1" y="1" width="3" height="3" fill="#c0c0c0"/><rect x="16" y="1" width="3" height="3" fill="#c0c0c0"/></svg>
<svg class="a" style="left:1187px;top:254px" width="18" height="18" viewBox="0 0 18 18" fill="#bdbdbd"><circle cx="9" cy="6" r="5.5"/><circle cx="6" cy="12" r="5.5" opacity="0.8"/><circle cx="12" cy="12" r="5.5" opacity="0.8"/></svg>

<!-- layers panel -->
<div class="a" style="left:1260px;top:75px;width:180px;height:16px;background:#3c3c3c"></div>
<div class="t" style="left:1224px;top:78px;color:#ececec">Layers</div>
<svg class="a" style="left:1419px;top:78px" width="18" height="10" viewBox="0 0 18 10"><path d="M0,3 L6,3 L3,6Z" fill="#ddd"/><rect x="7" y="1" width="10" height="1.3" fill="#ddd"/><rect x="7" y="4" width="10" height="1.3" fill="#ddd"/><rect x="7" y="7" width="10" height="1.3" fill="#ddd"/></svg>
<div class="a" style="left:1217px;top:119px;width:223px;height:1px;background:#3e3e3e"></div>
<div class="a" style="left:1217px;top:120px;width:223px;height:1px;background:#606060"></div>
<div class="a" style="left:1217px;top:147px;width:223px;height:1px;background:#3e3e3e"></div>
<div class="a" style="left:1217px;top:148px;width:223px;height:1px;background:#606060"></div>
<div class="a" style="left:1222px;top:97px;width:69px;height:19px;background:linear-gradient(#666,#565656);border:1px solid #363636;border-radius:3px"></div>
<svg class="a" style="left:1227px;top:100px" width="12" height="12" viewBox="0 0 12 12"><circle cx="7" cy="5" r="3.5" fill="none" stroke="#ddd" stroke-width="1.3"/><path d="M5,7 L1,11" stroke="#ddd" stroke-width="1.6"/></svg>
<div class="t" style="left:1243px;top:100px;color:#f0f0f0">Kind</div>
<svg class="a" style="left:1280px;top:100px" width="7" height="12" viewBox="0 0 7 12"><path d="M0,5 L3.5,1 L7,5Z M0,7 L3.5,11 L7,7Z" fill="#e8e8e8"/></svg>
<svg class="a" style="left:1302px;top:99px" width="14" height="12" viewBox="0 0 14 12"><rect x="0.5" y="0.5" width="13" height="11" fill="none" stroke="#bbb"/><path d="M2,10 L5,6 L7,8 L9,5 L12,10Z" fill="#bbb"/></svg>
<svg class="a" style="left:1327px;top:99px" width="12" height="12" viewBox="0 0 12 12"><circle cx="6" cy="6" r="5.5" fill="#b8b8b8"/><path d="M10,2 A5.5,5.5 0 0,1 2,10Z" fill="#707070"/></svg>
<div class="t" style="left:1350px;top:96px;font-family:'Liberation Serif',serif;font-size:15px;line-height:16px;color:#c8c8c8">T</div>
<svg class="a" style="left:1375px;top:99px" width="13" height="13" viewBox="0 0 13 13" fill="none" stroke="#bbb"><rect x="2" y="2" width="9" height="9"/><rect x="0.5" y="0.5" width="3" height="3" fill="#535353"/><rect x="9.5" y="0.5" width="3" height="3" fill="#535353"/><rect x="0.5" y="9.5" width="3" height="3" fill="#535353"/><rect x="9.5" y="9.5" width="3" height="3" fill="#535353"/></svg>
<svg class="a" style="left:1400px;top:99px" width="12" height="13" viewBox="0 0 12 13"><path d="M4,0.5 L9,0.5 L11.5,3 L11.5,12.5 L4,12.5Z" fill="none" stroke="#bbb"/><rect x="0" y="6" width="6" height="7" fill="#bbb"/></svg>
<div class="a" style="left:1425px;top:97px;width:9px;height:17px;background:linear-gradient(#888 0,#888 50%,#3a3a3a 50%);border:1px solid #333"></div>
<!-- normal row -->
<div class="a" style="left:1222px;top:125px;width:109px;height:19px;background:linear-gradient(#666,#565656);border:1px solid #363636;border-radius:3px"></div>
<div class="t" style="left:1229px;top:128px;color:#f0f0f0">Normal</div>
<svg class="a" style="left:1320px;top:128px" width="7" height="12" viewBox="0 0 7 12"><path d="M0,5 L3.5,1 L7,5Z M0,7 L3.5,11 L7,7Z" fill="#e8e8e8"/></svg>
<div class="t" style="left:1339px;top:127px;color:#ececec">Opacity:</div>
<div class="a" style="left:1381px;top:124px;width:53px;height:19px;background:#393939;border:1px solid #2e2e2e;border-radius:2px"></div>
<div class="a" style="left:1416px;top:125px;width:17px;height:17px;background:#5c5c5c"></div>
<div class="t" style="left:1386px;top:128px;color:#f4f4f4">42%</div>
<div class="a" style="left:1421px;top:132px;width:0;height:0;border-left:3.5px solid transparent;border-right:3.5px solid transparent;border-top:4px solid #e8e8e8"></div>
<!-- lock row -->
<div class="t" style="left:1223px;top:156px;color:#ececec">Lock:</div>
<div class="a" style="left:1256px;top:156px;width:11px;height:11px;background:conic-gradient(#777 0 25%,#5e5e5e 0 50%,#777 0 75%,#5e5e5e 0) 0 0/5.5px 5.5px"></div>
<svg class="a" style="left:1275px;top:155px" width="16" height="14" viewBox="0 0 16 14"><path d="M15,1 L7,9 L8,10 L15.5,2Z" fill="#888"/><path d="M6,9 C4,9 3,12 0,13 C4,14 8,13 8,11Z" fill="#888"/></svg>
<svg class="a" style="left:1298px;top:154px" width="14" height="14" viewBox="0 0 14 14" fill="#c8c8c8"><path d="M7,0 L10,3 L8,3 L8,6 L11,6 L11,4 L14,7 L11,10 L11,8 L8,8 L8,11 L10,11 L7,14 L4,11 L6,11 L6,8 L3,8 L3,10 L0,7 L3,4 L3,6 L6,6 L6,3 L4,3Z"/></svg>
<svg class="a" style="left:1322px;top:154px" width="11" height="14" viewBox="0 0 11 14"><path d="M2.5,6 L2.5,4 A3,3 0 0,1 8.5,4 L8.5,6" fill="none" stroke="#c0c0c0" stroke-width="1.6"/><rect x="0.5" y="6" width="10" height="8" fill="#c0c0c0"/><rect x="4.5" y="8.5" width="2" height="3" fill="#535353"/></svg>
<div class="t" style="left:1361px;top:155px;color:#ececec">Fill:</div>
<div class="a" style="left:1381px;top:152px;width:53px;height:19px;background:#393939;border:1px solid #2e2e2e;border-radius:2px"></div>
<div class="a" style="left:1416px;top:153px;width:17px;height:17px;background:#5c5c5c"></div>
<div class="t" style="left:1386px;top:156px;color:#f4f4f4">100%</div>
<div class="a" style="left:1421px;top:160px;width:0;height:0;border-left:3.5px solid transparent;border-right:3.5px solid transparent;border-top:4px solid #e8e8e8"></div>
<!-- layer list -->
<div class="a" style="left:1217px;top:176px;width:223px;height:1px;background:#3e3e3e"></div>
<div class="a" style="left:1424px;top:177px;width:16px;height:665px;background:#4b4b4b"></div>
<div class="a" style="left:1217px;top:177px;width:207px;height:1px;background:#3e3e3e"></div>
<!-- row1 selected -->
<div class="a" style="left:1247px;top:178px;width:177px;height:30px;background:#5b6779"></div>
<div class="a" style="left:1217px;top:208px;width:207px;height:1px;background:#3e3e3e"></div>
<div class="a" style="left:1217px;top:239px;width:207px;height:1px;background:#3e3e3e"></div>
<div class="a" style="left:1217px;top:278px;width:207px;height:1px;background:#3e3e3e"></div>
<div class="a" style="left:1217px;top:310px;width:207px;height:1px;background:#3e3e3e"></div>
<div class="a" style="left:1247px;top:178px;width:1px;height:132px;background:#3e3e3e"></div>
<!-- eyes -->
<svg class="a" style="left:1225px;top:188px" width="14" height="10" viewBox="0 0 14 10"><path d="M0.5,5 C4,0 10,0 13.5,5 C10,10 4,10 0.5,5Z" fill="#c8c8c8"/><circle cx="7" cy="5" r="2.6" fill="#535353"/><circle cx="7" cy="5" r="1.2" fill="#c8c8c8"/></svg>
<svg class="a" style="left:1225px;top:219px" width="14" height="10" viewBox="0 0 14 10"><path d="M0.5,5 C4,0 10,0 13.5,5 C10,10 4,10 0.5,5Z" fill="#c8c8c8"/><circle cx="7" cy="5" r="2.6" fill="#535353"/><circle cx="7" cy="5" r="1.2" fill="#c8c8c8"/></svg>
<svg class="a" style="left:1225px;top:254px" width="14" height="10" viewBox="0 0 14 10"><path d="M0.5,5 C4,0 10,0 13.5,5 C10,10 4,10 0.5,5Z" fill="#c8c8c8"/><circle cx="7" cy="5" r="2.6" fill="#535353"/><circle cx="7" cy="5" r="1.2" fill="#c8c8c8"/></svg>
<div class="a" style="left:1226px;top:288px;width:12px;height:12px;border:1px solid #3a3a3a;background:#4e4e4e"></div>
<!-- row1 content -->
<div class="t" style="left:1256px;top:188px;font-size:10px;color:#ddd">↲</div>
<div class="a" style="left:1267px;top:181px;width:31px;height:24px;border:1px solid #222;background:radial-gradient(ellipse at 70% 20%,#e0e8f0 0,#5a8ad0 25%,transparent 45%),radial-gradient(ellipse at 30% 65%,#f0b040 0,#c86a18 35%,#5a2a08 75%),#2a3a6a"></div>
<div class="a" style="left:1287px;top:193px;width:11px;height:12px;background:#555"></div>
<div class="a" style="left:1289px;top:195px;width:7px;height:8px;border:1px solid #ccc;border-radius:1px"></div>
<svg class="a" style="left:1302px;top:186px" width="8" height="16" viewBox="0 0 8 16" fill="none" stroke="#a8a8a8" stroke-width="1.6"><rect x="1" y="1" width="6" height="8" rx="3"/><rect x="1" y="7" width="6" height="8" rx="3"/></svg>
<div class="a" style="left:1313px;top:180px;width:35px;height:27px;border:1px solid #fff"></div>
<div class="a" style="left:1314px;top:182px;width:31px;height:23px;background:#fff;border:1px solid #222"></div>
<svg class="a" style="left:1318px;top:183px" width="22" height="22" viewBox="0 0 22 22"><path d="M6,22 L6,12 C6,9 9,8 9,4 L9,2 L12,2 L12,4 C12,8 15,9 15,12 L15,22" fill="none" stroke="#bbb" stroke-width="1"/></svg>
<div class="t" style="left:1356px;top:189px;color:#f2f2f2">sea-g70a...</div>
<!-- row2 -->
<div class="a" style="left:1251px;top:212px;width:31px;height:23px;background:conic-gradient(#ddd 0 25%,#fff 0 50%,#ddd 0 75%,#fff 0) 0 0/8px 8px;border:1px solid #222"></div>
<svg class="a" style="left:1252px;top:213px" width="30" height="22" viewBox="0 0 30 22"><path d="M12,22 L12,12 C12,10 14,9 15,7 L15,4 L18,4 L18,9 L20,11 L21,22Z" fill="#000"/></svg>
<div class="t" style="left:1293px;top:219px;color:#f0f0f0;text-decoration:underline">780e51c3d8a610f2891e...</div>
<div class="a" style="left:1290px;top:230px;width:125px;height:1px;background:#eee"></div>
<!-- row3 -->
<div class="a" style="left:1251px;top:243px;width:31px;height:31px;background:#fff;border:1px solid #222"></div>
<div class="a" style="left:1252px;top:264px;width:29px;height:1px;background:#333"></div>
<div class="a" style="left:1263px;top:266px;width:0;height:0;border-left:3px solid transparent;border-right:3px solid transparent;border-bottom:4px solid #222"></div>
<svg class="a" style="left:1286px;top:251px" width="8" height="16" viewBox="0 0 8 16" fill="none" stroke="#a8a8a8" stroke-width="1.6"><rect x="1" y="1" width="6" height="8" rx="3"/><rect x="1" y="7" width="6" height="8" rx="3"/></svg>
<div class="a" style="left:1298px;top:247px;width:32px;height:24px;background:#fff;border:1px solid #222"></div>
<div class="t" style="left:1340px;top:255px;color:#f0f0f0">Color Fill 1</div>
<!-- row4 -->
<div class="a" style="left:1251px;top:282px;width:31px;height:24px;background:#fff;border:1px solid #222"></div>
<div class="t" style="left:1293px;top:289px;color:#f0f0f0;font-style:italic">Background</div>
<svg class="a" style="left:1396px;top:287px" width="11" height="13" viewBox="0 0 11 13"><path d="M2.5,6 L2.5,4 A3,3 0 0,1 8.5,4 L8.5,6" fill="none" stroke="#bbb" stroke-width="1.3"/><rect x="1" y="6" width="9" height="6.5" fill="none" stroke="#bbb" stroke-width="1.2"/><rect x="4.5" y="8" width="2" height="2.5" fill="#bbb"/></svg>
<div class="a" style="left:1217px;top:311px;width:207px;height:531px;background:#4b4b4b"></div>
<!-- layers footer -->
<div class="a" style="left:1217px;top:842px;width:223px;height:17px;background:#535353;border-top:1px solid #3a3a3a"></div>
<svg class="a" style="left:1236px;top:845px" width="190" height="12" viewBox="0 0 190 12" fill="#b0b0b0">
<rect x="0" y="3" width="8" height="6" rx="3" fill="none" stroke="#888" stroke-width="1.3"/><rect x="5" y="3" width="8" height="6" rx="3" fill="none" stroke="#888" stroke-width="1.3"/>
<text x="29" y="10" font-family="Liberation Serif" font-style="italic" font-size="12" fill="#b0b0b0">fx</text>
<rect x="54" y="2" width="13" height="9"/><circle cx="60.5" cy="6.5" r="2.5" fill="#535353"/>
<circle cx="88" cy="6" r="5.5"/><path d="M92,2 A5.5,5.5 0 0,1 84,10Z" fill="#666"/>
<path d="M109,2 L114,2 L115,3 L121,3 L121,11 L109,11Z"/>
<path d="M136,1 L145,1 L145,11 L138,11 L138,6 L136,6Z"/>
<path d="M161,3 L171,3 M163,3 L164,11 L168,11 L169,3 M164,1 L168,1" stroke="#b0b0b0" stroke-width="1.5" fill="none"/>
</svg>

<!-- taskbar -->
<div class="a" style="left:0;top:859px;width:1440px;height:41px;background:linear-gradient(90deg,#3a2220 0,#3e2420 340px,#4a2a24 400px,#5a3026 480px,#5a3a36 530px,#5e4e5a 560px,#62525c 650px,#8a6a50 700px,#7a5a48 740px,#6a4030 790px,#6a4434 840px,#5a4a5a 870px,#5e5060 960px,#574a5a 1030px,#8a5a40 1065px,#9a7058 1100px,#7a5040 1150px,#5a3a34 1200px,#4a3030 1260px,#3e2a2a 1440px)"></div>

<!-- taskbar items -->
<div class="a" style="left:0;top:859px;width:1440px;height:1px;background:#1e1414"></div><div class="a" style="left:0;top:860px;width:1440px;height:1px;background:rgba(230,210,200,0.45)"></div>
<div class="a" style="left:0;top:860px;width:1440px;height:40px;background:linear-gradient(rgba(255,255,255,0.06),rgba(0,0,0,0.08))"></div>
<div class="a" style="left:8px;top:861px;width:38px;height:38px;border-radius:50%;background:radial-gradient(circle at 50% 30%,#a0d8f0 0,#3a90d0 40%,#0e4a80 75%,#6aa8d0 100%);box-shadow:0 0 2px #000"></div>
<svg class="a" style="left:13px;top:866px" width="27" height="27" viewBox="0 0 22 22"><path d="M2,5 C5,3 8,4 10,5 L9,10 C7,9 4,8 1,10Z" fill="#f05a28"/><path d="M11,5 C14,6 17,6 20,4 L19,9 C16,11 13,11 10,10Z" fill="#7cbb00"/><path d="M1,11 C4,9 7,10 9,11 L8,16 C6,15 3,14 0,16Z" fill="#00a1f1"/><path d="M10,11 C13,12 16,12 19,10 L18,15 C15,17 12,17 9,16Z" fill="#ffbb00"/></svg>
<div class="a" style="left:60px;top:861px;width:58px;height:38px;border:1px solid rgba(255,230,220,0.35);border-radius:3px;background:linear-gradient(rgba(255,240,235,0.28),rgba(255,230,220,0.08) 50%,rgba(0,0,0,0.05))"></div>
<div class="a" style="left:122px;top:861px;width:58px;height:38px;border:1px solid rgba(255,230,220,0.35);border-radius:3px;background:linear-gradient(rgba(255,240,235,0.28),rgba(255,230,220,0.08) 50%,rgba(0,0,0,0.05))"></div>
<div class="a" style="left:184px;top:861px;width:58px;height:38px;border:1px solid rgba(255,230,220,0.35);border-radius:3px;background:linear-gradient(rgba(255,240,235,0.28),rgba(255,230,220,0.08) 50%,rgba(0,0,0,0.05))"></div>
<div class="a" style="left:246px;top:861px;width:58px;height:38px;border:1px solid rgba(255,240,230,0.6);border-radius:3px;background:linear-gradient(rgba(255,240,235,0.55),rgba(255,230,220,0.3) 50%,rgba(255,230,220,0.2))"></div>
<div class="a" style="left:308px;top:861px;width:54px;height:38px;border:1px solid rgba(255,230,220,0.35);border-radius:3px;background:linear-gradient(rgba(255,240,235,0.28),rgba(255,230,220,0.08) 50%,rgba(0,0,0,0.05))"></div>
<div class="a" style="left:363px;top:861px;width:2px;height:38px;background:rgba(255,230,220,0.2)"></div>
<!-- explorer -->
<svg class="a" style="left:72px;top:866px" width="34" height="30" viewBox="0 0 34 30">
<path d="M1,5 L12,5 L14,3 L32,3 L32,27 L1,27 Z" fill="#e8cf80"/>
<rect x="3" y="2" width="9" height="3" fill="#f4f4f4"/><rect x="3" y="2" width="3" height="2" fill="#2aa040"/>
<rect x="12" y="4" width="10" height="3" fill="#f4f4f4"/><rect x="12" y="4" width="3" height="2" fill="#d04020"/>
<rect x="20" y="6" width="10" height="3" fill="#f4f4f4"/><rect x="20" y="6" width="3" height="2" fill="#3090d0"/>
<path d="M1,9 L32,9 L32,27 L1,27 Z" fill="#f6e6a8"/>
<path d="M5,28 L5,17 L28,17 L28,28 L23,28 L23,22 L10,22 L10,28 Z" fill="#8ac8f0" stroke="#3a8ad0" stroke-width="0.8"/>
</svg>
<!-- firefox -->
<svg class="a" style="left:134px;top:864px" width="33" height="32" viewBox="0 0 33 32">
<defs><radialGradient id="ffo" cx="0.3" cy="0.75" r="0.9"><stop offset="0" stop-color="#ff3a5a"/><stop offset="0.45" stop-color="#ff6a20"/><stop offset="1" stop-color="#ffd040"/></radialGradient><radialGradient id="ffp" cx="0.4" cy="0.4" r="0.7"><stop offset="0" stop-color="#8a5af0"/><stop offset="1" stop-color="#5a2ab0"/></radialGradient></defs>
<path d="M16,31 C7,31 1,24 2,16 C2,12 4,9 6,7 C6,10 7,11 9,12 C10,8 13,6 16,6 C15,3 18,1 20,0 C22,4 27,6 29,10 C32,15 32,22 28,27 C25,30 21,31 16,31 Z" fill="url(#ffo)"/>
<circle cx="16.5" cy="17.5" r="7.5" fill="url(#ffp)"/>
<path d="M6,12 C8,10 12,10 14,12 C11,12 10,14 10,16 C8,16 6,14 6,12 Z" fill="#ff8a30"/>
</svg>
<!-- Id -->
<div class="a" style="left:198px;top:865px;width:30px;height:27px;background:#3a0826;border:2px solid #d84a9a"></div>
<div class="t" style="left:204px;top:869px;font-size:15px;line-height:18px;font-weight:bold;letter-spacing:0;color:#ee60b0">Id</div>
<!-- Ps -->
<div class="a" style="left:260px;top:865px;width:29px;height:27px;background:#0a1040;border:2px solid #5a8ad8"></div>
<div class="t" style="left:264px;top:869px;font-size:15px;line-height:18px;font-weight:bold;letter-spacing:0;color:#7ab0f8">Ps</div>
<!-- photos -->
<svg class="a" style="left:316px;top:864px" width="34" height="30" viewBox="0 0 34 30"><rect x="3" y="4" width="28" height="22" fill="#f0f6fa"/><rect x="5" y="6" width="24" height="18" fill="#a8d8f0"/><path d="M5,16 C10,12 14,11 18,14 C22,17 26,15 29,16 L29,24 L5,24 Z" fill="#4a8a6a"/><path d="M5,20 C12,18 20,19 29,21 L29,24 L5,24Z" fill="#8ac0d8"/><path d="M1,8 L1,1 L8,1 M26,1 L33,1 L33,8 M33,22 L33,29 L26,29 M8,29 L1,29 L1,22" stroke="#2a8ae8" stroke-width="2.5" fill="none"/></svg>
<!-- tray -->
<div class="t" style="left:1230px;top:872px;font-size:12px;line-height:14px;color:#f0f0f0">AR</div>
<div class="a" style="left:1262px;top:879px;width:0;height:0;border-left:4px solid transparent;border-right:4px solid transparent;border-bottom:4px solid #eee"></div>
<svg class="a" style="left:1281px;top:872px" width="20" height="18" viewBox="0 0 20 18"><path d="M1,6 L5,6 L9,2 L9,14 L5,10 L1,10Z" fill="#e8e8e8"/><circle cx="12" cy="12" r="4.5" fill="#e02020" stroke="#fff" stroke-width="1"/><path d="M10,10 L14,14 M14,10 L10,14" stroke="#fff" stroke-width="1.3"/></svg>
<svg class="a" style="left:1306px;top:870px" width="20" height="20" viewBox="0 0 20 20"><path d="M2,2 L2,18" stroke="#eee" stroke-width="1.5"/><path d="M3,3 L12,3 L12,10 L3,10Z" fill="#eee"/><circle cx="12" cy="13" r="4.5" fill="#e02020" stroke="#fff" stroke-width="1"/><path d="M10,11 L14,15 M14,11 L10,15" stroke="#fff" stroke-width="1.3"/></svg>
<svg class="a" style="left:1331px;top:870px" width="18" height="20" viewBox="0 0 18 20"><path d="M3,1 L3,7 M7,1 L7,7 M2,7 L8,7 L8,10 L2,10Z" stroke="#eee" fill="none" stroke-width="1.3"/><rect x="6" y="7" width="10" height="8" fill="#222" stroke="#eee" stroke-width="1.3"/><path d="M11,15 L11,18 M7,18 L15,18" stroke="#eee" stroke-width="1.3"/></svg>
<div class="t" style="left:1368px;top:866px;font-size:12px;line-height:14px;color:#f4f4f4">4:15 PM</div>
<div class="t" style="left:1360px;top:883px;font-size:12px;line-height:14px;color:#f4f4f4">10/21/2021</div>
<div class="a" style="left:1426px;top:861px;width:14px;height:39px;border:1px solid rgba(255,230,220,0.4);border-right:none;background:linear-gradient(rgba(255,255,255,0.2),rgba(255,255,255,0.05))"></div>

<!-- brush popup -->
<div class="a" style="left:13px;top:60px;width:266px;height:266px;background:#5f5f5f;border:1px solid #3a3a3a"></div>
<div class="t" style="left:30px;top:78px;color:#e8e8e8">Size:</div>
<div class="a" style="left:170px;top:75px;width:55px;height:18px;background:#fff;border:1px solid #4a6a9a"></div>
<div class="a" style="left:174px;top:78px;width:32px;height:13px;background:#3a8ee8"></div>
<div class="t" style="left:175px;top:78px;color:#fff">432 px</div>
<svg class="a" style="left:249px;top:72px" width="16" height="14" viewBox="0 0 16 14"><g fill="#d0d0d0" transform="translate(7,7)"><rect x="-1.2" y="-6" width="2.4" height="3" transform="rotate(0)"/><rect x="-1.2" y="-6" width="2.4" height="3" transform="rotate(45)"/><rect x="-1.2" y="-6" width="2.4" height="3" transform="rotate(90)"/><rect x="-1.2" y="-6" width="2.4" height="3" transform="rotate(135)"/><rect x="-1.2" y="-6" width="2.4" height="3" transform="rotate(180)"/><rect x="-1.2" y="-6" width="2.4" height="3" transform="rotate(225)"/><rect x="-1.2" y="-6" width="2.4" height="3" transform="rotate(270)"/><rect x="-1.2" y="-6" width="2.4" height="3" transform="rotate(315)"/><circle r="4"/></g><circle cx="7" cy="7" r="1.6" fill="#5f5f5f"/><path d="M13,10 L15,10 L14,11Z" fill="#aaa"/></svg>
<div class="a" style="left:30px;top:102px;width:195px;height:5px;background:#363636;border-radius:3px;border-bottom:1px solid #6a6a6a"></div>
<div class="a" style="left:193px;top:104px;width:11px;height:10px;background:linear-gradient(#e0e0e0,#999);clip-path:polygon(50% 0,100% 50%,100% 100%,0 100%,0 50%)"></div>
<div class="a" style="left:248px;top:104px;width:11px;height:11px;background:#d0d0d0;clip-path:polygon(30% 0,100% 0,100% 100%,30% 100%,30% 40%,0 40%,0 0)"></div>
<div class="t" style="left:30px;top:128px;color:#e8e8e8">Hardness:</div>
<div class="a" style="left:175px;top:125px;width:50px;height:18px;background:#393939"></div>
<div class="t" style="left:180px;top:128px;color:#f0f0f0">0%</div>
<div class="a" style="left:30px;top:150px;width:195px;height:5px;background:#363636;border-radius:3px;border-bottom:1px solid #6a6a6a"></div>
<div class="a" style="left:25px;top:152px;width:11px;height:10px;background:linear-gradient(#e0e0e0,#999);clip-path:polygon(50% 0,100% 50%,100% 100%,0 100%,0 50%)"></div>
<div class="a" style="left:14px;top:172px;width:264px;height:1px;background:#474747"></div>
<div class="a" style="left:14px;top:173px;width:264px;height:1px;background:#6a6a6a"></div>
<svg class="a" style="left:266px;top:314px" width="9" height="9" viewBox="0 0 9 9" fill="#ddd"><rect x="6" y="0" width="2" height="2"/><rect x="3" y="3" width="2" height="2"/><rect x="6" y="3" width="2" height="2"/><rect x="0" y="6" width="2" height="2"/><rect x="3" y="6" width="2" height="2"/><rect x="6" y="6" width="2" height="2"/></svg>

<svg width="0" height="0" style="position:absolute"><defs><linearGradient id="bf" x1="0" y1="0" x2="0" y2="1"><stop offset="0" stop-color="#f4f4f4"/><stop offset="1" stop-color="#999"/></linearGradient></defs></svg>
<div class="a" style="left:24px;top:182px;width:211px;height:131px;background:#2f2f2f"></div>
<div class="a" style="left:25px;top:183px;width:31px;height:31px;background:#3a3a3a"><div class="a" style="left:1px;top:1px;width:30px;height:30px;background:radial-gradient(circle,#fff 0,#bbb 25%,#777 50%,#3a3a3a 72%)"></div></div>
<div class="a" style="left:57px;top:183px;width:31px;height:31px;background:#3a3a3a"><div class="a" style="left:1px;top:1px;width:30px;height:30px;background:radial-gradient(circle,#fff 0,#fff 60%,#3a3a3a 68%)"></div></div>
<div class="a" style="left:89px;top:183px;width:31px;height:31px;background:#3a3a3a"><div class="a" style="left:1px;top:1px;width:30px;height:30px;background:radial-gradient(circle,#fff 0,#bbb 25%,#777 50%,#3a3a3a 72%)"></div></div>
<div class="a" style="left:121px;top:183px;width:31px;height:31px;background:#3a3a3a"><div class="a" style="left:1px;top:1px;width:30px;height:30px;background:radial-gradient(circle,#fff 0,#fff 60%,#3a3a3a 68%)"></div></div>
<div class="a" style="left:153px;top:183px;width:31px;height:31px;background:#3a3a3a"><div class="a" style="left:1px;top:1px;width:30px;height:30px;background:radial-gradient(circle,#fff 0,#bbb 25%,#777 50%,#3a3a3a 72%)"></div></div>
<div class="a" style="left:185px;top:183px;width:31px;height:31px;background:#3a3a3a"><div class="a" style="left:1px;top:1px;width:30px;height:30px;background:radial-gradient(circle,#fff 0,#fff 60%,#3a3a3a 68%)"></div></div>
<div class="a" style="left:25px;top:215px;width:31px;height:31px;background:#3a3a3a"><svg class="a" style="left:8px;top:11px" width="16" height="11" viewBox="0 0 16 11"><rect x="0" y="2" width="6" height="7" fill="url(#bf)"/><path d="M6,2 L11,2 L15,5.5 L11,9 L6,9Z" fill="#ccc"/></svg></div>
<div class="a" style="left:57px;top:215px;width:31px;height:31px;background:#3a3a3a"><svg class="a" style="left:8px;top:11px" width="16" height="11" viewBox="0 0 16 11"><rect x="0" y="1" width="3" height="9" fill="#aaa"/><rect x="4" y="1" width="2" height="9" fill="#ccc"/><rect x="7" y="2" width="8" height="7" fill="#ddd"/><path d="M8,4 L14,4 M8,6 L14,6" stroke="#999" stroke-width="0.8"/></svg></div>
<div class="a" style="left:89px;top:215px;width:31px;height:31px;background:#3a3a3a"><svg class="a" style="left:8px;top:11px" width="16" height="11" viewBox="0 0 16 11"><rect x="0" y="1" width="3" height="9" fill="#aaa"/><rect x="4" y="1" width="2" height="9" fill="#ccc"/><rect x="7" y="2" width="8" height="7" fill="#ddd"/><path d="M8,4 L14,4 M8,6 L14,6" stroke="#999" stroke-width="0.8"/></svg></div>
<div class="a" style="left:121px;top:215px;width:31px;height:31px;background:#3a3a3a"><svg class="a" style="left:8px;top:11px" width="16" height="11" viewBox="0 0 16 11"><rect x="0" y="1" width="3" height="9" fill="#aaa"/><rect x="4" y="1" width="2" height="9" fill="#ccc"/><rect x="7" y="2" width="8" height="7" fill="#ddd"/><path d="M8,4 L14,4 M8,6 L14,6" stroke="#999" stroke-width="0.8"/></svg></div>
<div class="a" style="left:153px;top:215px;width:31px;height:31px;background:#3a3a3a"><svg class="a" style="left:8px;top:11px" width="16" height="11" viewBox="0 0 16 11"><rect x="0" y="3" width="6" height="5" fill="#bbb"/><path d="M6,4 L13,0 C15,4 15,7 13,11 L6,7Z" fill="#ddd"/><path d="M8,4 L13,2 M8,6 L14,6 M8,7 L13,9" stroke="#999" stroke-width="0.7"/></svg></div>
<div class="a" style="left:185px;top:215px;width:31px;height:31px;background:#3a3a3a"><svg class="a" style="left:8px;top:11px" width="16" height="11" viewBox="0 0 16 11"><rect x="0" y="2" width="6" height="7" fill="url(#bf)"/><path d="M6,2 L11,2 L15,5.5 L11,9 L6,9Z" fill="#555"/></svg></div>
<div class="a" style="left:25px;top:247px;width:31px;height:31px;background:#3a3a3a"><svg class="a" style="left:8px;top:11px" width="16" height="11" viewBox="0 0 16 11"><rect x="0" y="2" width="6" height="7" fill="url(#bf)"/><path d="M6,2 L15,2 L13,9 L6,9Z" fill="#666"/><path d="M7,4 L14,4 M7,6 L13,6" stroke="#888" stroke-width="0.8"/></svg></div>
<div class="a" style="left:57px;top:247px;width:31px;height:31px;background:#3a3a3a"><svg class="a" style="left:8px;top:11px" width="16" height="11" viewBox="0 0 16 11"><rect x="0" y="2" width="6" height="7" fill="url(#bf)"/><path d="M6,2 L15,2 L13,9 L6,9Z" fill="#666"/><path d="M7,4 L14,4 M7,6 L13,6" stroke="#888" stroke-width="0.8"/></svg></div>
<div class="a" style="left:89px;top:247px;width:31px;height:31px;background:#3a3a3a"><svg class="a" style="left:8px;top:11px" width="16" height="11" viewBox="0 0 16 11"><rect x="0" y="2" width="6" height="7" fill="url(#bf)"/><path d="M6,2 L15,2 L13,9 L6,9Z" fill="#666"/><path d="M7,4 L14,4 M7,6 L13,6" stroke="#888" stroke-width="0.8"/></svg></div>
<div class="a" style="left:121px;top:247px;width:31px;height:31px;background:#3a3a3a"><svg class="a" style="left:8px;top:11px" width="16" height="11" viewBox="0 0 16 11"><rect x="0" y="3" width="6" height="5" fill="#bbb"/><path d="M6,4 L13,0 C15,4 15,7 13,11 L6,7Z" fill="#ddd"/><path d="M8,4 L13,2 M8,6 L14,6 M8,7 L13,9" stroke="#999" stroke-width="0.7"/></svg></div>
<div class="a" style="left:153px;top:247px;width:31px;height:31px;background:#3a3a3a"><div class="a" style="left:1px;top:1px;width:30px;height:30px;background:radial-gradient(circle,#fff 0,#bbb 25%,#777 50%,#3a3a3a 72%)"></div></div>
<div class="a" style="left:185px;top:247px;width:31px;height:31px;background:#3a3a3a"><div class="a" style="left:1px;top:1px;width:30px;height:30px;background:radial-gradient(circle,#fff 0,#bbb 25%,#777 50%,#3a3a3a 72%)"></div></div>
<div class="a" style="left:25px;top:279px;width:31px;height:31px;background:#3a3a3a"><svg class="a" style="left:8px;top:11px" width="16" height="11" viewBox="0 0 16 11"><rect x="0" y="2" width="6" height="7" fill="url(#bf)"/><path d="M6,2 L15,2 L13,9 L6,9Z" fill="#666"/><path d="M7,4 L14,4 M7,6 L13,6" stroke="#888" stroke-width="0.8"/></svg></div>
<div class="a" style="left:57px;top:279px;width:31px;height:31px;background:#3a3a3a"><svg class="a" style="left:8px;top:11px" width="16" height="11" viewBox="0 0 16 11"><rect x="0" y="2" width="6" height="7" fill="url(#bf)"/><path d="M6,2 L15,2 L13,9 L6,9Z" fill="#666"/><path d="M7,4 L14,4 M7,6 L13,6" stroke="#888" stroke-width="0.8"/></svg></div>
<div class="a" style="left:89px;top:279px;width:31px;height:31px;background:#3a3a3a"><svg class="a" style="left:8px;top:11px" width="16" height="11" viewBox="0 0 16 11"><rect x="0" y="2" width="9" height="7" fill="url(#bf)"/><path d="M9,2 L12,4 L15,4 L15,7 L12,7 L9,9Z" fill="#bbb"/></svg></div>
<div class="a" style="left:121px;top:279px;width:31px;height:31px;background:#3a3a3a"><svg class="a" style="left:8px;top:6px" width="16" height="11" viewBox="0 0 16 11"><rect x="0" y="2" width="9" height="7" fill="url(#bf)"/><path d="M9,2 L12,4 L15,4 L15,7 L12,7 L9,9Z" fill="#bbb"/></svg></div>
<div class="a" style="left:153px;top:279px;width:31px;height:31px;background:#3a3a3a"><svg class="a" style="left:8px;top:6px" width="16" height="11" viewBox="0 0 16 11"><rect x="4" y="0" width="6" height="1.5" fill="#ccc"/><rect x="0" y="4" width="12" height="5" fill="url(#bf)"/><path d="M12,5 L16,6 L16,7 L12,8Z" fill="#ddd"/></svg></div>
<div class="a" style="left:185px;top:279px;width:31px;height:31px;background:#3a3a3a"><svg class="a" style="left:8px;top:13px" width="16" height="11" viewBox="0 0 16 11"><rect x="4" y="0" width="6" height="1.5" fill="#ccc"/><rect x="0" y="4" width="12" height="5" fill="url(#bf)"/><path d="M12,5 L16,6 L16,7 L12,8Z" fill="#ddd"/></svg></div>
<div class="a" style="left:25px;top:183px;width:32px;height:32px;border:2px solid #5b7bb4"></div>
<div class="t" style="left:131px;top:298px;font-size:10px;color:#eee">25</div>
<div class="t" style="left:163px;top:298px;font-size:10px;color:#eee">50</div>
<!-- scrollbar -->
<div class="a" style="left:217px;top:183px;width:18px;height:129px;background:#363636"></div>
<div class="a" style="left:222px;top:188px;width:0;height:0;border-left:3px solid transparent;border-right:3px solid transparent;border-bottom:3px solid #eee"></div>
<div class="a" style="left:222px;top:304px;width:0;height:0;border-left:3px solid transparent;border-right:3px solid transparent;border-top:3px solid #eee"></div>
<div class="a" style="left:220px;top:201px;width:12px;height:17px;background:linear-gradient(90deg,#7a7a7a,#686868);border-radius:3px"></div>
</body></html>
